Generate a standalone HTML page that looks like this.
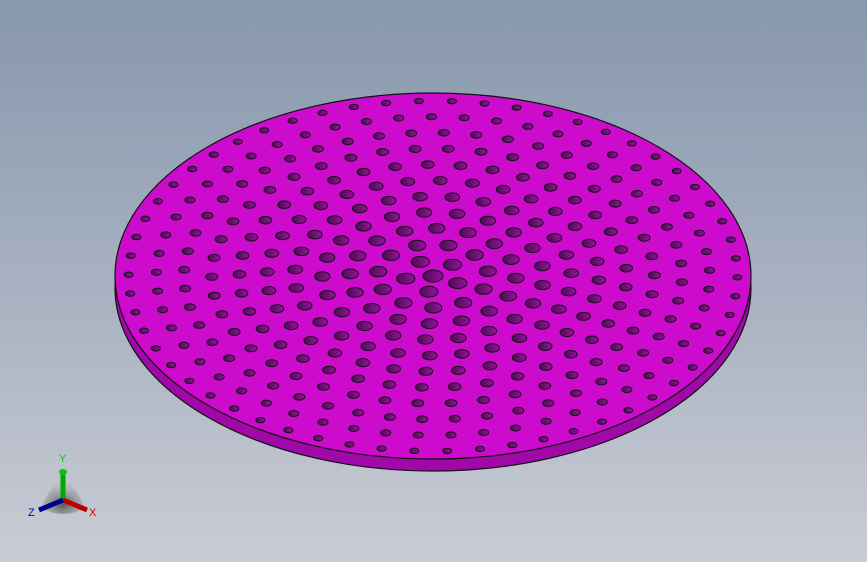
<!DOCTYPE html>
<html><head><style>
html,body{margin:0;padding:0;width:867px;height:562px;overflow:hidden}
body{background:linear-gradient(#8797ad 0%,#aab3c2 55%,#c9ccd4 100%)}
svg{position:absolute;left:0;top:0}
</style></head><body>
<svg id="s" width="867" height="562" viewBox="0 0 867 562" xmlns="http://www.w3.org/2000/svg">
<defs>
<linearGradient id="h" x1="0" x2="1" y1="0" y2="0"><stop offset="0" stop-color="#4a0a52"/><stop offset="1" stop-color="#9a12a0"/></linearGradient>
<radialGradient id="tri" cx="0.5" cy="0.7" r="0.6"><stop offset="0" stop-color="#555"/><stop offset="1" stop-color="#aaa" stop-opacity="0.3"/></radialGradient>
</defs>
<ellipse cx="433" cy="288" rx="318" ry="183" fill="#a008a8" stroke="#111" stroke-width="1.2"/>
<ellipse cx="433" cy="276" rx="318" ry="183" fill="#cc0bcc" stroke="#111" stroke-width="1.2"/>
<g id="holes"></g>
<g transform="translate(63,500)">
<path d="M-22,8 Q0,-45 22,8 Q0,20 -22,8Z" fill="url(#tri)"/>
<line x1="0" y1="0" x2="0" y2="-26" stroke="#0a0" stroke-width="5"/>
<ellipse cx="0" cy="-28" rx="4" ry="3" fill="#0c0"/>
<line x1="0" y1="0" x2="24" y2="10" stroke="#b00" stroke-width="5"/>
<line x1="0" y1="0" x2="-24" y2="10" stroke="#008" stroke-width="5"/>
<text x="-4" y="-38" font-family="Liberation Sans,sans-serif" font-size="11" fill="#0c0">Y</text>
<text x="26" y="16" font-family="Liberation Sans,sans-serif" font-size="11" fill="#d00">X</text>
<text x="-35" y="16" font-family="Liberation Sans,sans-serif" font-size="11" fill="#00c">Z</text>
</g>
</svg>
<script>
var g=document.getElementById('holes'),out='';
var cx=433,cy=276,rx=318,ry=183;
function hole(r,t,sz){
 var x=cx+r*Math.cos(t)*rx,y=cy+r*Math.sin(t)*ry;
 out+='<ellipse cx="'+x.toFixed(1)+'" cy="'+y.toFixed(1)+'" rx="'+(sz).toFixed(1)+'" ry="'+(sz*0.6).toFixed(1)+'" fill="url(#h)" stroke="#111" stroke-width="1"/>';
}
hole(0,0,10);
for(var k=1;k<=11;k++){
 var r=k*0.087,n=Math.round(5.3*k),sz=9.5-k*0.45;
 for(var i=0;i<n;i++){hole(r,(i+0.37*k)*2*Math.PI/n,sz);}
}
g.innerHTML=out;
</script>
</body></html>
